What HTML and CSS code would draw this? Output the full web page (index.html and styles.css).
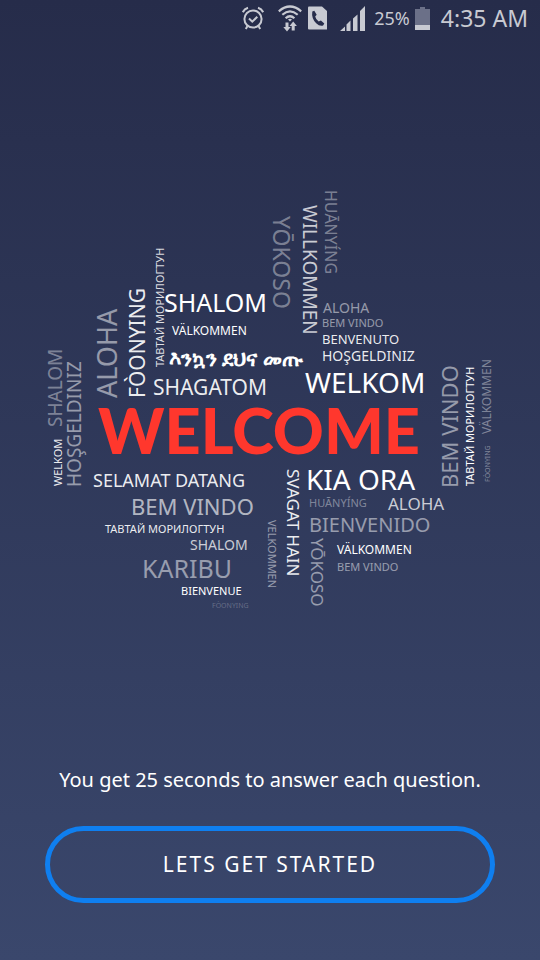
FILE: index.html
```
<!DOCTYPE html>
<html lang="en">
<head>
<meta charset="utf-8">
<meta name="viewport" content="width=device-width, initial-scale=1">
<title>Welcome</title>
<link rel="stylesheet" href="styles.css">
</head>
<body>
<div class="screen">
  <header class="status">
    <svg class="icon alarm" width="22" height="24" viewBox="0 0 22 24" aria-hidden="true">
      <g fill="none" stroke="currentColor" stroke-width="2">
        <circle cx="11" cy="13" r="8.6"/>
        <path d="M7 12.5l3.3 3.2 5-5" />
        <path d="M.8 6.2Q2.400 2.800 6 1.700M21.200 6.200Q19.600 2.800 16 1.700"/>
        <path d="M5.500 20l-1.700 3M16.500 20l1.700 3"/>
      </g>
    </svg>
    <svg class="icon wifi" width="24" height="27" viewBox="0 0 24 27" aria-hidden="true">
      <g fill="none" stroke="currentColor" stroke-width="2.200">
        <path d="M.8 6.300Q12-3.300 23.200 6.300"/>
        <path d="M4.300 9.800Q12 3 19.700 9.800"/>
        <path d="M7.600 13.200Q12 9.300 16.400 13.200"/>
      </g>
      <path fill="currentColor" d="M10 14.500q2-1.600 4 0l-2 2zM7.500 17.500h3v4.500h2.200L9 26.500 5.300 22h2.200zM13.700 25.500v-4.500h-2.200L15.200 16.500l3.700 4.500h-2.200v4.500z"/>
    </svg>
    <svg class="icon call" width="19" height="24" viewBox="0 0 19 24" aria-hidden="true">
      <path fill="currentColor" d="M1 .5h13l5 4.500v18.500H1q-1 0-1-1v-21q0-1 1-1z"/>
      <path class="cutout" d="M4.300 5.500l2-.8 2.400 4-1.500 1.700q.8 3.300 3.500 5.200l2.200-1 3.400 3-1.200 1.900q-3.300 1.200-6.900-2.200Q3.200 12.300 4.300 5.500z"/>
    </svg>
    <svg class="icon signal" width="25" height="25" viewBox="0 0 25 25" aria-hidden="true">
      <path fill="currentColor" d="M0 25l5-4.500V25zM6.500 18.500l4-4V25h-4zM13 12.500l4.500-4V25H13zM20 5l5-5v25h-5z"/>
    </svg>
    <span class="percent">25%</span>
    <svg class="icon battery" width="15" height="23" viewBox="0 0 15 23" aria-hidden="true">
      <path class="empty" d="M5 0h5v2h5v16H0V2h5z"/>
      <path fill="currentColor" d="M0 18h15v5H0z"/>
    </svg>
    <time class="clock">4:35 AM</time>
  </header>

  <main class="hero">
    <svg class="cloud" viewBox="0 0 540 440" role="img" aria-label="Welcome in many languages">
      <!-- horizontal words, top -->
      <text class="s25 o100" x="164" y="132">SHALOM</text>
      <text class="s12 o100" x="172" y="155">VÄLKOMMEN</text>
      <text class="ethiopic o100" x="169" y="186">እንኳን ደህና መጡ</text>
      <text class="s21 o90" x="153" y="215">SHAGATOM</text>
      <text class="s14 o50" x="323" y="133">ALOHA</text>
      <text class="s11 o50" x="322" y="147">BEM VINDO</text>
      <text class="s13 o90" x="322" y="164">BENVENUTO</text>
      <text class="s14 o90" x="322" y="181">HOŞGELDINIZ</text>
      <text class="s28 o100" x="305" y="213">WELKOM</text>
      <text class="title" x="98" y="274">WELCOME</text>
      <!-- horizontal words, bottom -->
      <text class="s18 o90" x="93" y="307">SELAMAT DATANG</text>
      <text class="s22 o60" x="131" y="335">BEM VINDO</text>
      <text class="s11 o90" x="105" y="353">ТАВТАЙ МОРИЛОГТУН</text>
      <text class="s14 o70" x="190" y="370">SHALOM</text>
      <text class="s25 o50" x="142" y="398">KARIBU</text>
      <text class="s11 o100" x="181" y="415">BIENVENUE</text>
      <text class="s7 o25" x="212" y="428">FÒONYING</text>
      <text class="s28 o100" x="306" y="310">KIA ORA</text>
      <text class="s11 o40" x="309" y="327">HUĀNYÍNG</text>
      <text class="s17 o70" x="388" y="330">ALOHA</text>
      <text class="s20 o50" x="309" y="352">BIENVENIDO</text>
      <text class="s12 o100" x="337" y="374">VÄLKOMMEN</text>
      <text class="s11 o50" x="337" y="391">BEM VINDO</text>
      <!-- words reading downwards -->
      <text class="s24 o40" transform="translate(273 36) rotate(90)">YŌKOSO</text>
      <text class="s19 o70" transform="translate(303 25) rotate(90)">WILLKOMMEN</text>
      <text class="s16 o40" transform="translate(325 10) rotate(90)">HUĀNYÍNG</text>
      <text class="s17 o90" transform="translate(287 289) rotate(90)">SVAGAT HAIN</text>
      <text class="s11 o50" transform="translate(268 340) rotate(90)">VELKOMMEN</text>
      <text class="s17 o50" transform="translate(311 358) rotate(90)">YŌKOSO</text>
      <!-- words reading upwards -->
      <text class="s19 o40" transform="translate(62 247) rotate(-90)">SHALOM</text>
      <text class="s19 o50" transform="translate(81 307) rotate(-90)">HOŞGELDINIZ</text>
      <text class="s11 o90" transform="translate(62 306) rotate(-90)">WELKOM</text>
      <text class="s27 o50" transform="translate(117 218) rotate(-90)">ALOHA</text>
      <text class="s21 o90" transform="translate(145 218) rotate(-90)">FÒONYING</text>
      <text class="s11 o80" transform="translate(164 187) rotate(-90)">ТАВТАЙ МОРИЛОГТУН</text>
      <text class="s22 o50" transform="translate(458 308) rotate(-90)">BEM VINDO</text>
      <text class="s11 o100" transform="translate(474 306) rotate(-90)">ТАВТАЙ МОРИЛОГТУН</text>
      <text class="s12 o40" transform="translate(491 254) rotate(-90)">VÄLKOMMEN</text>
      <text class="s7 o40" transform="translate(490 302) rotate(-90)">FÒONYING</text>
    </svg>
  </main>

  <footer class="actions">
    <p class="hint">You get 25 seconds to answer each question.</p>
    <button class="start" type="button">LETS GET STARTED</button>
  </footer>
</div>
</body>
</html>
```
FILE: styles.css
```
* {
  box-sizing: border-box;
}

body {
  margin: 0;
  font-family: "Noto Sans", "Open Sans", sans-serif;
  color: #fff;
}

.screen {
  display: flex;
  flex-direction: column;
  min-height: 100vh;
  background: linear-gradient(#262c4a, #3a476c);
}

.status {
  display: flex;
  align-items: center;
  justify-content: flex-end;
  height: 36px;
  padding-right: 12px;
  color: #c8cad2;
}

.icon {
  display: block;
  flex: none;
}

.wifi {
  margin-left: 14px;
}

.call {
  margin-left: 6px;
}

.signal {
  margin: 0 9px 0 13px;
}

.battery {
  margin: 0 11px 0 5px;
}

.cutout {
  fill: #262c4a;
}

.empty {
  fill: #6b7088;
}

.percent {
  font-size: 18px;
  line-height: 36px;
}

.clock {
  font-size: 23px;
  line-height: 36px;
}

.hero {
  flex: 1;
  display: flex;
  align-items: center;
  justify-content: center;
  padding-bottom: 2px;
}

.cloud {
  display: block;
  width: 100%;
  max-width: 720px;
  fill: #fff;
}

.title {
  font: 900 63px Lato, sans-serif;
  fill: #ff372d;
}

.ethiopic {
  font-size: 21px;
  font-weight: 700;
}

.s7 { font-size: 7px; }
.s11 { font-size: 11px; }
.s12 { font-size: 12px; }
.s13 { font-size: 13px; }
.s14 { font-size: 14px; }
.s16 { font-size: 16px; }
.s17 { font-size: 17px; }
.s18 { font-size: 18px; }
.s19 { font-size: 19px; }
.s20 { font-size: 20px; }
.s21 { font-size: 21px; }
.s22 { font-size: 22px; }
.s24 { font-size: 23px; }
.s25 { font-size: 25px; }
.s27 { font-size: 27px; }
.s28 { font-size: 28px; }

.o25 { fill-opacity: 0.25; }
.o40 { fill-opacity: 0.4; }
.o50 { fill-opacity: 0.5; }
.o60 { fill-opacity: 0.65; }
.o70 { fill-opacity: 0.75; }
.o80 { fill-opacity: 0.85; }
.o90 { fill-opacity: 0.92; }
.o100 { fill-opacity: 1; }

.actions {
  display: flex;
  flex-direction: column;
  gap: 32px;
  padding: 0 45px 57px;
}

.hint {
  margin: 0;
  font-size: 20px;
  line-height: 28px;
  text-align: center;
}

.start {
  padding: 18px 24px;
  border: 5px solid #0f7ff0;
  border-radius: 40px;
  background: transparent;
  color: #fff;
  font-family: inherit;
  font-size: 21px;
  line-height: 31px;
  letter-spacing: 2px;
}
```
